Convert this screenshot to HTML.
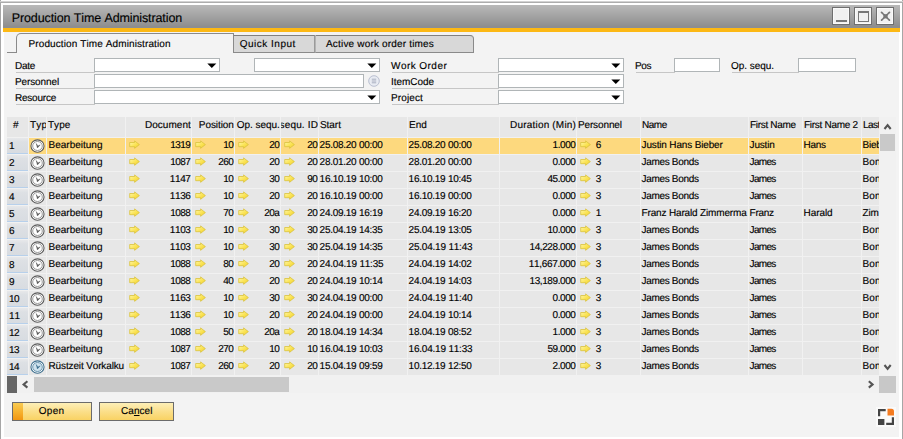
<!DOCTYPE html><html><head><meta charset="utf-8"><title>Production Time Administration</title><style>
html,body{margin:0;padding:0}
body{width:903px;height:439px;background:#fff;position:relative;overflow:hidden;font-family:"Liberation Sans", sans-serif;font-size:10px;color:#000;font-kerning:none;text-rendering:geometricPrecision}
div,span,svg{position:absolute;box-sizing:border-box}
.t{white-space:pre;line-height:12px;height:12px;font-size:10px;-webkit-text-stroke:0.14px #000}
.in{background:#fff;border:1px solid #b0b5b7;height:14px}
.ul{height:1px;background:#c6c6c6}
.cell{overflow:hidden}
.ar{overflow:visible}

</style></head><body>
<svg width="0" height="0" style="left:0;top:0"><defs><linearGradient id="ag" x1="0" y1="0" x2="1" y2="1"><stop offset="0" stop-color="#fff9b4"/><stop offset="0.5" stop-color="#fbe55a"/><stop offset="1" stop-color="#f2d026"/></linearGradient></defs></svg>
<div style="left:0;top:0;width:1px;height:439px;background:#a6a6a6"></div>
<div style="left:902px;top:0;width:1px;height:439px;background:#a6a6a6"></div>
<div style="left:0;top:1px;width:903px;height:1px;background:#d2d2d2"></div>
<div style="left:0;top:2px;width:903px;height:1px;background:#adadad"></div>
<div style="left:3px;top:5px;width:897px;height:23px;background:linear-gradient(#b9b9b9,#8b8b8b)"></div>
<div style="left:3px;top:27px;width:897px;height:1px;background:#8b8e95"></div>
<div style="left:3px;top:28px;width:897px;height:4px;background:#fcb814"></div>
<div style="left:4px;top:32px;width:895px;height:405px;background:#f3f3f3"></div>
<span class="t" style="top:10.7px;letter-spacing:-0.110px;font-size:12.5px;line-height:14px;height:14px;left:11.7px;">Production Time Administration</span>
<div style="left:832px;top:7px;width:18px;height:18px;background:#f1f1f1;border:1px solid #6f6f6f;box-shadow:inset 0 0 0 1px #fafafa"></div>
<div style="left:854px;top:7px;width:18px;height:18px;background:#f1f1f1;border:1px solid #6f6f6f;box-shadow:inset 0 0 0 1px #fafafa"></div>
<div style="left:876px;top:7px;width:18px;height:18px;background:#f1f1f1;border:1px solid #6f6f6f;box-shadow:inset 0 0 0 1px #fafafa"></div>
<div style="left:836px;top:20px;width:11px;height:2px;background:#777"></div>
<div style="left:858px;top:11px;width:11px;height:11px;border:1px solid #777;border-top-width:2px"></div>
<svg style="left:880px;top:11px" width="11" height="11" viewBox="0 0 11 11"><path d="M1.5 1.3L9.5 9.3M9.5 1.3L1.5 9.3" stroke="#777" stroke-width="1.7" stroke-linecap="round" stroke-dasharray="1.6 0.8"/><rect x="3.4" y="3.2" width="4.2" height="4.2" fill="#777"/></svg>
<div style="left:233px;top:35px;width:82px;height:18px;background:#d8d8d8;border:1px solid #8a8a8a;border-left:none;border-top-color:#808080;border-right-color:#9a9a9a"></div>
<div style="left:315px;top:35px;width:159px;height:18px;background:#d8d8d8;border:1px solid #8a8a8a;border-left:1px solid #b4b4b4;border-top-color:#808080;border-radius:0 4px 0 0"></div>
<div style="left:16px;top:33px;width:218px;height:20px;background:#f3f3f3;border:1px solid #8a8a8a;border-bottom:none;border-radius:5px 0 0 0"></div>
<div style="left:7px;top:52px;width:10px;height:1px;background:#8a8a8a"></div>
<span class="t" style="top:39px;letter-spacing:0.105px;left:28.5px;">Production Time Administration</span>
<span class="t" style="top:39px;letter-spacing:0.493px;left:239.8px;">Quick Input</span>
<span class="t" style="top:39px;letter-spacing:0.177px;left:326.0px;">Active work order times</span>
<span class="t" style="top:61px;letter-spacing:-0.281px;left:15.0px;">Date</span>
<div class="ul" style="left:16px;top:72px;width:79px"></div>
<span class="t" style="top:77px;letter-spacing:-0.115px;left:15.0px;">Personnel</span>
<div class="ul" style="left:16px;top:88px;width:79px"></div>
<span class="t" style="top:93px;letter-spacing:-0.225px;left:15.0px;">Resource</span>
<div class="ul" style="left:16px;top:104px;width:79px"></div>
<span class="t" style="top:61px;letter-spacing:0.451px;left:391.0px;">Work Order</span>
<div class="ul" style="left:392px;top:72px;width:107px"></div>
<span class="t" style="top:77px;letter-spacing:-0.044px;left:391.0px;">ItemCode</span>
<div class="ul" style="left:392px;top:88px;width:107px"></div>
<span class="t" style="top:93px;letter-spacing:0.125px;left:391.0px;">Project</span>
<div class="ul" style="left:392px;top:104px;width:107px"></div>
<span class="t" style="top:61px;letter-spacing:-0.411px;left:635.0px;">Pos</span>
<div class="ul" style="left:636px;top:72px;width:39px"></div>
<span class="t" style="top:61px;letter-spacing:-0.040px;left:731.0px;">Op. sequ.</span>
<div class="ul" style="left:732px;top:72px;width:67px"></div>
<div class="in" style="left:94px;top:58px;width:126px"></div>
<svg style="left:207px;top:63px" width="10" height="6" viewBox="0 0 10 6"><path d="M0.3 0.4H9.3L4.8 5Z" fill="#000"/></svg>
<div class="in" style="left:254px;top:58px;width:126px"></div>
<svg style="left:367px;top:63px" width="10" height="6" viewBox="0 0 10 6"><path d="M0.3 0.4H9.3L4.8 5Z" fill="#000"/></svg>
<div class="in" style="left:94px;top:74px;width:270px"></div>
<div class="in" style="left:94px;top:90px;width:286px"></div>
<svg style="left:367px;top:95px" width="10" height="6" viewBox="0 0 10 6"><path d="M0.3 0.4H9.3L4.8 5Z" fill="#000"/></svg>
<div class="in" style="left:498px;top:58px;width:126px"></div>
<svg style="left:611px;top:63px" width="10" height="6" viewBox="0 0 10 6"><path d="M0.3 0.4H9.3L4.8 5Z" fill="#000"/></svg>
<div class="in" style="left:498px;top:74px;width:126px"></div>
<svg style="left:611px;top:79px" width="10" height="6" viewBox="0 0 10 6"><path d="M0.3 0.4H9.3L4.8 5Z" fill="#000"/></svg>
<div class="in" style="left:498px;top:90px;width:126px"></div>
<svg style="left:611px;top:95px" width="10" height="6" viewBox="0 0 10 6"><path d="M0.3 0.4H9.3L4.8 5Z" fill="#000"/></svg>
<div class="in" style="left:674px;top:58px;width:46px"></div>
<div class="in" style="left:798px;top:58px;width:58px"></div>
<svg style="left:368px;top:75px" width="12" height="12" viewBox="0 0 12 12"><circle cx="6" cy="6" r="5.3" fill="#e9ecf3" stroke="#b9bfd0" stroke-width="1"/><path d="M3.8 4.2H8.2M3.8 6H8.2M3.8 7.8H8.2" stroke="#a3a9ba" stroke-width="0.9"/></svg>
<div style="left:7px;top:117px;width:872px;height:259px;background:#f1f1f1"></div>
<div class="cell" style="left:7px;top:117px;width:21px;height:20px;background:#e7e7e7;"><span class="t" style="top:3px;letter-spacing:1.438px;left:6.1px;">#</span></div>
<div class="cell" style="left:29px;top:117px;width:17px;height:20px;background:#e7e7e7;"><span class="t" style="top:3px;letter-spacing:0.294px;left:0.9px;">Typ</span></div>
<div class="cell" style="left:47px;top:117px;width:78px;height:20px;background:#e7e7e7;"><span class="t" style="top:3px;letter-spacing:0.080px;left:0.9px;">Type</span></div>
<div class="cell" style="left:126px;top:117px;width:65px;height:20px;background:#e7e7e7;"><span class="t" style="top:3px;letter-spacing:0.053px;right:0.50px;margin-right:-0.45px;">Document</span></div>
<div class="cell" style="left:192px;top:117px;width:42px;height:20px;background:#e7e7e7;"><span class="t" style="top:3px;letter-spacing:-0.072px;right:0.50px;margin-right:-0.33px;">Position</span></div>
<div class="cell" style="left:235px;top:117px;width:45px;height:20px;background:#e7e7e7;"><span class="t" style="top:3px;letter-spacing:-0.040px;right:0.50px;margin-right:-0.36px;">Op. sequ.</span></div>
<div class="cell" style="left:281px;top:117px;width:37px;height:20px;background:#e7e7e7;"><span class="t" style="top:3px;letter-spacing:0.155px;right:0.50px;margin-right:-0.56px;">Op. sequ. ID</span></div>
<div class="cell" style="left:319px;top:117px;width:88px;height:20px;background:#e7e7e7;"><span class="t" style="top:3px;letter-spacing:-0.024px;left:0.9px;">Start</span></div>
<div class="cell" style="left:408px;top:117px;width:91px;height:20px;background:#e7e7e7;"><span class="t" style="top:3px;letter-spacing:0.069px;left:0.9px;">End</span></div>
<div class="cell" style="left:500px;top:117px;width:76px;height:20px;background:#e7e7e7;"><span class="t" style="top:3px;letter-spacing:0.189px;right:0.50px;margin-right:-0.59px;">Duration (Min)</span></div>
<div class="cell" style="left:577px;top:117px;width:63px;height:20px;background:#e7e7e7;"><span class="t" style="top:3px;letter-spacing:-0.115px;left:0.9px;">Personnel</span></div>
<div class="cell" style="left:641px;top:117px;width:107px;height:20px;background:#e7e7e7;"><span class="t" style="top:3px;letter-spacing:-0.419px;left:0.9px;">Name</span></div>
<div class="cell" style="left:749px;top:117px;width:53px;height:20px;background:#e7e7e7;"><span class="t" style="top:3px;letter-spacing:-0.289px;left:0.9px;">First Name</span></div>
<div class="cell" style="left:803px;top:117px;width:58px;height:20px;background:#e7e7e7;"><span class="t" style="top:3px;letter-spacing:-0.269px;left:0.9px;">First Name 2</span></div>
<div class="cell" style="left:862px;top:117px;width:17px;height:20px;background:#e7e7e7;"><span class="t" style="top:3px;letter-spacing:-0.475px;left:0.9px;">Last</span></div>
<div class="cell" style="left:7px;top:138px;width:21px;height:16px;background:linear-gradient(#e7e8ea,#dde0e4 25%,#d8dce1);border-bottom:1px solid #b7d0eb"><span class="t" style="top:3px;letter-spacing:-0.562px;left:2.1px;">1</span></div>
<div class="cell" style="left:29px;top:138px;width:17px;height:16px;background:#fdd97e;"><svg class="ar" style="left:1.2px;top:0.5px" width="15" height="14" viewBox="0 0 15 14"><ellipse cx="7.5" cy="7" rx="6.55" ry="6.15" fill="#fff" stroke="#5a5a5a" stroke-width="1.05"/><ellipse cx="7.5" cy="7" rx="4.8" ry="4.5" fill="#fff" stroke="#8c8c8c" stroke-width="0.9"/><path d="M6.3 4.6L7.4 8.9L10.2 5.9L7.8 7.1Z" fill="#5a5a5a" stroke="#5a5a5a" stroke-width="0.5" stroke-linejoin="round"/></svg></div>
<div class="cell" style="left:47px;top:138px;width:78px;height:16px;background:#fdd97e;"><span class="t" style="top:2px;letter-spacing:0.006px;left:1.5px;">Bearbeitung</span></div>
<div class="cell" style="left:126px;top:138px;width:65px;height:16px;background:#fdd97e;"><svg class="ar" style="left:2.5px;top:2.2px" width="12" height="10" viewBox="0 0 12 10"><path d="M0.7 2.5H5.6V0.9L10.4 4.6L5.6 8.3V6.7H0.7Z" fill="url(#ag)" stroke="#d9c23c" stroke-width="0.8" stroke-linejoin="round"/></svg><span class="t" style="top:2px;letter-spacing:-0.562px;right:0.50px;margin-right:0.16px;">1319</span></div>
<div class="cell" style="left:192px;top:138px;width:42px;height:16px;background:#fdd97e;"><svg class="ar" style="left:2.5px;top:2.2px" width="12" height="10" viewBox="0 0 12 10"><path d="M0.7 2.5H5.6V0.9L10.4 4.6L5.6 8.3V6.7H0.7Z" fill="url(#ag)" stroke="#d9c23c" stroke-width="0.8" stroke-linejoin="round"/></svg><span class="t" style="top:2px;letter-spacing:-0.562px;right:0.50px;margin-right:0.16px;">10</span></div>
<div class="cell" style="left:235px;top:138px;width:45px;height:16px;background:#fdd97e;"><svg class="ar" style="left:2.5px;top:2.2px" width="12" height="10" viewBox="0 0 12 10"><path d="M0.7 2.5H5.6V0.9L10.4 4.6L5.6 8.3V6.7H0.7Z" fill="url(#ag)" stroke="#d9c23c" stroke-width="0.8" stroke-linejoin="round"/></svg><span class="t" style="top:2px;letter-spacing:-0.562px;right:0.50px;margin-right:0.16px;">20</span></div>
<div class="cell" style="left:281px;top:138px;width:37px;height:16px;background:#fdd97e;"><svg class="ar" style="left:2.5px;top:2.2px" width="12" height="10" viewBox="0 0 12 10"><path d="M0.7 2.5H5.6V0.9L10.4 4.6L5.6 8.3V6.7H0.7Z" fill="url(#ag)" stroke="#d9c23c" stroke-width="0.8" stroke-linejoin="round"/></svg><span class="t" style="top:2px;letter-spacing:-0.562px;right:0.50px;margin-right:0.16px;">20</span></div>
<div class="cell" style="left:319px;top:138px;width:88px;height:16px;background:#fdd97e;"><span class="t" style="top:2px;letter-spacing:-0.266px;left:0.6px;">25.08.20 00:00</span></div>
<div class="cell" style="left:408px;top:138px;width:91px;height:16px;background:#fdd97e;"><span class="t" style="top:2px;letter-spacing:-0.266px;left:0.6px;">25.08.20 00:00</span></div>
<div class="cell" style="left:500px;top:138px;width:76px;height:16px;background:#fdd97e;"><span class="t" style="top:2px;letter-spacing:-0.405px;right:0.50px;margin-right:0.00px;">1.000</span></div>
<div class="cell" style="left:577px;top:138px;width:63px;height:16px;background:#fdd97e;"><svg class="ar" style="left:2.5px;top:2.2px" width="12" height="10" viewBox="0 0 12 10"><path d="M0.7 2.5H5.6V0.9L10.4 4.6L5.6 8.3V6.7H0.7Z" fill="url(#ag)" stroke="#d9c23c" stroke-width="0.8" stroke-linejoin="round"/></svg><span class="t" style="top:2px;letter-spacing:-0.562px;left:18.8px;">6</span></div>
<div class="cell" style="left:641px;top:138px;width:107px;height:16px;background:#fdd97e;"><span class="t" style="top:2px;letter-spacing:-0.163px;left:0.6px;">Justin Hans Bieber</span></div>
<div class="cell" style="left:749px;top:138px;width:53px;height:16px;background:#fdd97e;"><span class="t" style="top:2px;letter-spacing:-0.187px;left:0.6px;">Justin</span></div>
<div class="cell" style="left:803px;top:138px;width:58px;height:16px;background:#fdd97e;"><span class="t" style="top:2px;letter-spacing:-0.336px;left:0.6px;">Hans</span></div>
<div class="cell" style="left:862px;top:138px;width:17px;height:16px;background:#fdd97e;"><span class="t" style="top:2px;letter-spacing:-0.254px;left:0.6px;">Bieb</span></div>
<div class="cell" style="left:7px;top:155px;width:21px;height:16px;background:linear-gradient(#e7e8ea,#dde0e4 25%,#d8dce1);border-bottom:1px solid #b7d0eb"><span class="t" style="top:3px;letter-spacing:-0.562px;left:2.1px;">2</span></div>
<div class="cell" style="left:29px;top:155px;width:17px;height:16px;background:#e7e7e7;"><svg class="ar" style="left:1.2px;top:0.5px" width="15" height="14" viewBox="0 0 15 14"><ellipse cx="7.5" cy="7" rx="6.55" ry="6.15" fill="#fff" stroke="#5a5a5a" stroke-width="1.05"/><ellipse cx="7.5" cy="7" rx="4.8" ry="4.5" fill="#fff" stroke="#8c8c8c" stroke-width="0.9"/><path d="M6.3 4.6L7.4 8.9L10.2 5.9L7.8 7.1Z" fill="#5a5a5a" stroke="#5a5a5a" stroke-width="0.5" stroke-linejoin="round"/></svg></div>
<div class="cell" style="left:47px;top:155px;width:78px;height:16px;background:#e7e7e7;"><span class="t" style="top:2px;letter-spacing:0.006px;left:1.5px;">Bearbeitung</span></div>
<div class="cell" style="left:126px;top:155px;width:65px;height:16px;background:#e7e7e7;"><svg class="ar" style="left:2.5px;top:2.2px" width="12" height="10" viewBox="0 0 12 10"><path d="M0.7 2.5H5.6V0.9L10.4 4.6L5.6 8.3V6.7H0.7Z" fill="url(#ag)" stroke="#d9c23c" stroke-width="0.8" stroke-linejoin="round"/></svg><span class="t" style="top:2px;letter-spacing:-0.562px;right:0.50px;margin-right:0.16px;">1087</span></div>
<div class="cell" style="left:192px;top:155px;width:42px;height:16px;background:#e7e7e7;"><svg class="ar" style="left:2.5px;top:2.2px" width="12" height="10" viewBox="0 0 12 10"><path d="M0.7 2.5H5.6V0.9L10.4 4.6L5.6 8.3V6.7H0.7Z" fill="url(#ag)" stroke="#d9c23c" stroke-width="0.8" stroke-linejoin="round"/></svg><span class="t" style="top:2px;letter-spacing:-0.562px;right:0.50px;margin-right:0.16px;">260</span></div>
<div class="cell" style="left:235px;top:155px;width:45px;height:16px;background:#e7e7e7;"><svg class="ar" style="left:2.5px;top:2.2px" width="12" height="10" viewBox="0 0 12 10"><path d="M0.7 2.5H5.6V0.9L10.4 4.6L5.6 8.3V6.7H0.7Z" fill="url(#ag)" stroke="#d9c23c" stroke-width="0.8" stroke-linejoin="round"/></svg><span class="t" style="top:2px;letter-spacing:-0.562px;right:0.50px;margin-right:0.16px;">20</span></div>
<div class="cell" style="left:281px;top:155px;width:37px;height:16px;background:#e7e7e7;"><svg class="ar" style="left:2.5px;top:2.2px" width="12" height="10" viewBox="0 0 12 10"><path d="M0.7 2.5H5.6V0.9L10.4 4.6L5.6 8.3V6.7H0.7Z" fill="url(#ag)" stroke="#d9c23c" stroke-width="0.8" stroke-linejoin="round"/></svg><span class="t" style="top:2px;letter-spacing:-0.562px;right:0.50px;margin-right:0.16px;">20</span></div>
<div class="cell" style="left:319px;top:155px;width:88px;height:16px;background:#e7e7e7;"><span class="t" style="top:2px;letter-spacing:-0.266px;left:0.6px;">28.01.20 00:00</span></div>
<div class="cell" style="left:408px;top:155px;width:91px;height:16px;background:#e7e7e7;"><span class="t" style="top:2px;letter-spacing:-0.266px;left:0.6px;">28.01.20 00:00</span></div>
<div class="cell" style="left:500px;top:155px;width:76px;height:16px;background:#e7e7e7;"><span class="t" style="top:2px;letter-spacing:-0.405px;right:0.50px;margin-right:0.00px;">0.000</span></div>
<div class="cell" style="left:577px;top:155px;width:63px;height:16px;background:#e7e7e7;"><svg class="ar" style="left:2.5px;top:2.2px" width="12" height="10" viewBox="0 0 12 10"><path d="M0.7 2.5H5.6V0.9L10.4 4.6L5.6 8.3V6.7H0.7Z" fill="url(#ag)" stroke="#d9c23c" stroke-width="0.8" stroke-linejoin="round"/></svg><span class="t" style="top:2px;letter-spacing:-0.562px;left:18.8px;">3</span></div>
<div class="cell" style="left:641px;top:155px;width:107px;height:16px;background:#e7e7e7;"><span class="t" style="top:2px;letter-spacing:-0.326px;left:0.6px;">James Bonds</span></div>
<div class="cell" style="left:749px;top:155px;width:53px;height:16px;background:#e7e7e7;"><span class="t" style="top:2px;letter-spacing:-0.691px;left:0.6px;">James</span></div>
<div class="cell" style="left:803px;top:155px;width:58px;height:16px;background:#e7e7e7;"></div>
<div class="cell" style="left:862px;top:155px;width:17px;height:16px;background:#e7e7e7;"><span class="t" style="top:2px;letter-spacing:0.069px;left:0.6px;">Bon</span></div>
<div class="cell" style="left:7px;top:172px;width:21px;height:16px;background:linear-gradient(#e7e8ea,#dde0e4 25%,#d8dce1);border-bottom:1px solid #b7d0eb"><span class="t" style="top:3px;letter-spacing:-0.562px;left:2.1px;">3</span></div>
<div class="cell" style="left:29px;top:172px;width:17px;height:16px;background:#e7e7e7;"><svg class="ar" style="left:1.2px;top:0.5px" width="15" height="14" viewBox="0 0 15 14"><ellipse cx="7.5" cy="7" rx="6.55" ry="6.15" fill="#fff" stroke="#5a5a5a" stroke-width="1.05"/><ellipse cx="7.5" cy="7" rx="4.8" ry="4.5" fill="#fff" stroke="#8c8c8c" stroke-width="0.9"/><path d="M6.3 4.6L7.4 8.9L10.2 5.9L7.8 7.1Z" fill="#5a5a5a" stroke="#5a5a5a" stroke-width="0.5" stroke-linejoin="round"/></svg></div>
<div class="cell" style="left:47px;top:172px;width:78px;height:16px;background:#e7e7e7;"><span class="t" style="top:2px;letter-spacing:0.006px;left:1.5px;">Bearbeitung</span></div>
<div class="cell" style="left:126px;top:172px;width:65px;height:16px;background:#e7e7e7;"><svg class="ar" style="left:2.5px;top:2.2px" width="12" height="10" viewBox="0 0 12 10"><path d="M0.7 2.5H5.6V0.9L10.4 4.6L5.6 8.3V6.7H0.7Z" fill="url(#ag)" stroke="#d9c23c" stroke-width="0.8" stroke-linejoin="round"/></svg><span class="t" style="top:2px;letter-spacing:-0.376px;right:0.50px;margin-right:-0.02px;">1147</span></div>
<div class="cell" style="left:192px;top:172px;width:42px;height:16px;background:#e7e7e7;"><svg class="ar" style="left:2.5px;top:2.2px" width="12" height="10" viewBox="0 0 12 10"><path d="M0.7 2.5H5.6V0.9L10.4 4.6L5.6 8.3V6.7H0.7Z" fill="url(#ag)" stroke="#d9c23c" stroke-width="0.8" stroke-linejoin="round"/></svg><span class="t" style="top:2px;letter-spacing:-0.562px;right:0.50px;margin-right:0.16px;">10</span></div>
<div class="cell" style="left:235px;top:172px;width:45px;height:16px;background:#e7e7e7;"><svg class="ar" style="left:2.5px;top:2.2px" width="12" height="10" viewBox="0 0 12 10"><path d="M0.7 2.5H5.6V0.9L10.4 4.6L5.6 8.3V6.7H0.7Z" fill="url(#ag)" stroke="#d9c23c" stroke-width="0.8" stroke-linejoin="round"/></svg><span class="t" style="top:2px;letter-spacing:-0.562px;right:0.50px;margin-right:0.16px;">30</span></div>
<div class="cell" style="left:281px;top:172px;width:37px;height:16px;background:#e7e7e7;"><svg class="ar" style="left:2.5px;top:2.2px" width="12" height="10" viewBox="0 0 12 10"><path d="M0.7 2.5H5.6V0.9L10.4 4.6L5.6 8.3V6.7H0.7Z" fill="url(#ag)" stroke="#d9c23c" stroke-width="0.8" stroke-linejoin="round"/></svg><span class="t" style="top:2px;letter-spacing:-0.562px;right:0.50px;margin-right:0.16px;">90</span></div>
<div class="cell" style="left:319px;top:172px;width:88px;height:16px;background:#e7e7e7;"><span class="t" style="top:2px;letter-spacing:-0.266px;left:0.6px;">16.10.19 10:00</span></div>
<div class="cell" style="left:408px;top:172px;width:91px;height:16px;background:#e7e7e7;"><span class="t" style="top:2px;letter-spacing:-0.266px;left:0.6px;">16.10.19 10:45</span></div>
<div class="cell" style="left:500px;top:172px;width:76px;height:16px;background:#e7e7e7;"><span class="t" style="top:2px;letter-spacing:-0.431px;right:0.50px;margin-right:0.03px;">45.000</span></div>
<div class="cell" style="left:577px;top:172px;width:63px;height:16px;background:#e7e7e7;"><svg class="ar" style="left:2.5px;top:2.2px" width="12" height="10" viewBox="0 0 12 10"><path d="M0.7 2.5H5.6V0.9L10.4 4.6L5.6 8.3V6.7H0.7Z" fill="url(#ag)" stroke="#d9c23c" stroke-width="0.8" stroke-linejoin="round"/></svg><span class="t" style="top:2px;letter-spacing:-0.562px;left:18.8px;">3</span></div>
<div class="cell" style="left:641px;top:172px;width:107px;height:16px;background:#e7e7e7;"><span class="t" style="top:2px;letter-spacing:-0.326px;left:0.6px;">James Bonds</span></div>
<div class="cell" style="left:749px;top:172px;width:53px;height:16px;background:#e7e7e7;"><span class="t" style="top:2px;letter-spacing:-0.691px;left:0.6px;">James</span></div>
<div class="cell" style="left:803px;top:172px;width:58px;height:16px;background:#e7e7e7;"></div>
<div class="cell" style="left:862px;top:172px;width:17px;height:16px;background:#e7e7e7;"><span class="t" style="top:2px;letter-spacing:0.069px;left:0.6px;">Bon</span></div>
<div class="cell" style="left:7px;top:189px;width:21px;height:16px;background:linear-gradient(#e7e8ea,#dde0e4 25%,#d8dce1);border-bottom:1px solid #b7d0eb"><span class="t" style="top:3px;letter-spacing:-0.562px;left:2.1px;">4</span></div>
<div class="cell" style="left:29px;top:189px;width:17px;height:16px;background:#e7e7e7;"><svg class="ar" style="left:1.2px;top:0.5px" width="15" height="14" viewBox="0 0 15 14"><ellipse cx="7.5" cy="7" rx="6.55" ry="6.15" fill="#fff" stroke="#5a5a5a" stroke-width="1.05"/><ellipse cx="7.5" cy="7" rx="4.8" ry="4.5" fill="#fff" stroke="#8c8c8c" stroke-width="0.9"/><path d="M6.3 4.6L7.4 8.9L10.2 5.9L7.8 7.1Z" fill="#5a5a5a" stroke="#5a5a5a" stroke-width="0.5" stroke-linejoin="round"/></svg></div>
<div class="cell" style="left:47px;top:189px;width:78px;height:16px;background:#e7e7e7;"><span class="t" style="top:2px;letter-spacing:0.006px;left:1.5px;">Bearbeitung</span></div>
<div class="cell" style="left:126px;top:189px;width:65px;height:16px;background:#e7e7e7;"><svg class="ar" style="left:2.5px;top:2.2px" width="12" height="10" viewBox="0 0 12 10"><path d="M0.7 2.5H5.6V0.9L10.4 4.6L5.6 8.3V6.7H0.7Z" fill="url(#ag)" stroke="#d9c23c" stroke-width="0.8" stroke-linejoin="round"/></svg><span class="t" style="top:2px;letter-spacing:-0.376px;right:0.50px;margin-right:-0.02px;">1136</span></div>
<div class="cell" style="left:192px;top:189px;width:42px;height:16px;background:#e7e7e7;"><svg class="ar" style="left:2.5px;top:2.2px" width="12" height="10" viewBox="0 0 12 10"><path d="M0.7 2.5H5.6V0.9L10.4 4.6L5.6 8.3V6.7H0.7Z" fill="url(#ag)" stroke="#d9c23c" stroke-width="0.8" stroke-linejoin="round"/></svg><span class="t" style="top:2px;letter-spacing:-0.562px;right:0.50px;margin-right:0.16px;">10</span></div>
<div class="cell" style="left:235px;top:189px;width:45px;height:16px;background:#e7e7e7;"><svg class="ar" style="left:2.5px;top:2.2px" width="12" height="10" viewBox="0 0 12 10"><path d="M0.7 2.5H5.6V0.9L10.4 4.6L5.6 8.3V6.7H0.7Z" fill="url(#ag)" stroke="#d9c23c" stroke-width="0.8" stroke-linejoin="round"/></svg><span class="t" style="top:2px;letter-spacing:-0.562px;right:0.50px;margin-right:0.16px;">20</span></div>
<div class="cell" style="left:281px;top:189px;width:37px;height:16px;background:#e7e7e7;"><svg class="ar" style="left:2.5px;top:2.2px" width="12" height="10" viewBox="0 0 12 10"><path d="M0.7 2.5H5.6V0.9L10.4 4.6L5.6 8.3V6.7H0.7Z" fill="url(#ag)" stroke="#d9c23c" stroke-width="0.8" stroke-linejoin="round"/></svg><span class="t" style="top:2px;letter-spacing:-0.562px;right:0.50px;margin-right:0.16px;">20</span></div>
<div class="cell" style="left:319px;top:189px;width:88px;height:16px;background:#e7e7e7;"><span class="t" style="top:2px;letter-spacing:-0.266px;left:0.6px;">16.10.19 00:00</span></div>
<div class="cell" style="left:408px;top:189px;width:91px;height:16px;background:#e7e7e7;"><span class="t" style="top:2px;letter-spacing:-0.266px;left:0.6px;">16.10.19 00:00</span></div>
<div class="cell" style="left:500px;top:189px;width:76px;height:16px;background:#e7e7e7;"><span class="t" style="top:2px;letter-spacing:-0.405px;right:0.50px;margin-right:0.00px;">0.000</span></div>
<div class="cell" style="left:577px;top:189px;width:63px;height:16px;background:#e7e7e7;"><svg class="ar" style="left:2.5px;top:2.2px" width="12" height="10" viewBox="0 0 12 10"><path d="M0.7 2.5H5.6V0.9L10.4 4.6L5.6 8.3V6.7H0.7Z" fill="url(#ag)" stroke="#d9c23c" stroke-width="0.8" stroke-linejoin="round"/></svg><span class="t" style="top:2px;letter-spacing:-0.562px;left:18.8px;">3</span></div>
<div class="cell" style="left:641px;top:189px;width:107px;height:16px;background:#e7e7e7;"><span class="t" style="top:2px;letter-spacing:-0.326px;left:0.6px;">James Bonds</span></div>
<div class="cell" style="left:749px;top:189px;width:53px;height:16px;background:#e7e7e7;"><span class="t" style="top:2px;letter-spacing:-0.691px;left:0.6px;">James</span></div>
<div class="cell" style="left:803px;top:189px;width:58px;height:16px;background:#e7e7e7;"></div>
<div class="cell" style="left:862px;top:189px;width:17px;height:16px;background:#e7e7e7;"><span class="t" style="top:2px;letter-spacing:0.069px;left:0.6px;">Bon</span></div>
<div class="cell" style="left:7px;top:206px;width:21px;height:16px;background:linear-gradient(#e7e8ea,#dde0e4 25%,#d8dce1);border-bottom:1px solid #b7d0eb"><span class="t" style="top:3px;letter-spacing:-0.562px;left:2.1px;">5</span></div>
<div class="cell" style="left:29px;top:206px;width:17px;height:16px;background:#e7e7e7;"><svg class="ar" style="left:1.2px;top:0.5px" width="15" height="14" viewBox="0 0 15 14"><ellipse cx="7.5" cy="7" rx="6.55" ry="6.15" fill="#fff" stroke="#5a5a5a" stroke-width="1.05"/><ellipse cx="7.5" cy="7" rx="4.8" ry="4.5" fill="#fff" stroke="#8c8c8c" stroke-width="0.9"/><path d="M6.3 4.6L7.4 8.9L10.2 5.9L7.8 7.1Z" fill="#5a5a5a" stroke="#5a5a5a" stroke-width="0.5" stroke-linejoin="round"/></svg></div>
<div class="cell" style="left:47px;top:206px;width:78px;height:16px;background:#e7e7e7;"><span class="t" style="top:2px;letter-spacing:0.006px;left:1.5px;">Bearbeitung</span></div>
<div class="cell" style="left:126px;top:206px;width:65px;height:16px;background:#e7e7e7;"><svg class="ar" style="left:2.5px;top:2.2px" width="12" height="10" viewBox="0 0 12 10"><path d="M0.7 2.5H5.6V0.9L10.4 4.6L5.6 8.3V6.7H0.7Z" fill="url(#ag)" stroke="#d9c23c" stroke-width="0.8" stroke-linejoin="round"/></svg><span class="t" style="top:2px;letter-spacing:-0.562px;right:0.50px;margin-right:0.16px;">1088</span></div>
<div class="cell" style="left:192px;top:206px;width:42px;height:16px;background:#e7e7e7;"><svg class="ar" style="left:2.5px;top:2.2px" width="12" height="10" viewBox="0 0 12 10"><path d="M0.7 2.5H5.6V0.9L10.4 4.6L5.6 8.3V6.7H0.7Z" fill="url(#ag)" stroke="#d9c23c" stroke-width="0.8" stroke-linejoin="round"/></svg><span class="t" style="top:2px;letter-spacing:-0.562px;right:0.50px;margin-right:0.16px;">70</span></div>
<div class="cell" style="left:235px;top:206px;width:45px;height:16px;background:#e7e7e7;"><svg class="ar" style="left:2.5px;top:2.2px" width="12" height="10" viewBox="0 0 12 10"><path d="M0.7 2.5H5.6V0.9L10.4 4.6L5.6 8.3V6.7H0.7Z" fill="url(#ag)" stroke="#d9c23c" stroke-width="0.8" stroke-linejoin="round"/></svg><span class="t" style="top:2px;letter-spacing:-0.562px;right:0.50px;margin-right:0.16px;">20a</span></div>
<div class="cell" style="left:281px;top:206px;width:37px;height:16px;background:#e7e7e7;"><svg class="ar" style="left:2.5px;top:2.2px" width="12" height="10" viewBox="0 0 12 10"><path d="M0.7 2.5H5.6V0.9L10.4 4.6L5.6 8.3V6.7H0.7Z" fill="url(#ag)" stroke="#d9c23c" stroke-width="0.8" stroke-linejoin="round"/></svg><span class="t" style="top:2px;letter-spacing:-0.562px;right:0.50px;margin-right:0.16px;">20</span></div>
<div class="cell" style="left:319px;top:206px;width:88px;height:16px;background:#e7e7e7;"><span class="t" style="top:2px;letter-spacing:-0.266px;left:0.6px;">24.09.19 16:19</span></div>
<div class="cell" style="left:408px;top:206px;width:91px;height:16px;background:#e7e7e7;"><span class="t" style="top:2px;letter-spacing:-0.266px;left:0.6px;">24.09.19 16:20</span></div>
<div class="cell" style="left:500px;top:206px;width:76px;height:16px;background:#e7e7e7;"><span class="t" style="top:2px;letter-spacing:-0.405px;right:0.50px;margin-right:0.00px;">0.000</span></div>
<div class="cell" style="left:577px;top:206px;width:63px;height:16px;background:#e7e7e7;"><svg class="ar" style="left:2.5px;top:2.2px" width="12" height="10" viewBox="0 0 12 10"><path d="M0.7 2.5H5.6V0.9L10.4 4.6L5.6 8.3V6.7H0.7Z" fill="url(#ag)" stroke="#d9c23c" stroke-width="0.8" stroke-linejoin="round"/></svg><span class="t" style="top:2px;letter-spacing:-0.562px;left:18.8px;">1</span></div>
<div class="cell" style="left:641px;top:206px;width:107px;height:16px;background:#e7e7e7;"><span class="t" style="top:2px;letter-spacing:-0.160px;left:0.6px;">Franz Harald Zimmerma</span></div>
<div class="cell" style="left:749px;top:206px;width:53px;height:16px;background:#e7e7e7;"><span class="t" style="top:2px;letter-spacing:-0.312px;left:0.6px;">Franz</span></div>
<div class="cell" style="left:803px;top:206px;width:58px;height:16px;background:#e7e7e7;"><span class="t" style="top:2px;letter-spacing:-0.077px;left:0.6px;">Harald</span></div>
<div class="cell" style="left:862px;top:206px;width:17px;height:16px;background:#e7e7e7;"><span class="t" style="top:2px;letter-spacing:-0.220px;left:0.6px;">Zim</span></div>
<div class="cell" style="left:7px;top:223px;width:21px;height:16px;background:linear-gradient(#e7e8ea,#dde0e4 25%,#d8dce1);border-bottom:1px solid #b7d0eb"><span class="t" style="top:3px;letter-spacing:-0.562px;left:2.1px;">6</span></div>
<div class="cell" style="left:29px;top:223px;width:17px;height:16px;background:#e7e7e7;"><svg class="ar" style="left:1.2px;top:0.5px" width="15" height="14" viewBox="0 0 15 14"><ellipse cx="7.5" cy="7" rx="6.55" ry="6.15" fill="#fff" stroke="#5a5a5a" stroke-width="1.05"/><ellipse cx="7.5" cy="7" rx="4.8" ry="4.5" fill="#fff" stroke="#8c8c8c" stroke-width="0.9"/><path d="M6.3 4.6L7.4 8.9L10.2 5.9L7.8 7.1Z" fill="#5a5a5a" stroke="#5a5a5a" stroke-width="0.5" stroke-linejoin="round"/></svg></div>
<div class="cell" style="left:47px;top:223px;width:78px;height:16px;background:#e7e7e7;"><span class="t" style="top:2px;letter-spacing:0.006px;left:1.5px;">Bearbeitung</span></div>
<div class="cell" style="left:126px;top:223px;width:65px;height:16px;background:#e7e7e7;"><svg class="ar" style="left:2.5px;top:2.2px" width="12" height="10" viewBox="0 0 12 10"><path d="M0.7 2.5H5.6V0.9L10.4 4.6L5.6 8.3V6.7H0.7Z" fill="url(#ag)" stroke="#d9c23c" stroke-width="0.8" stroke-linejoin="round"/></svg><span class="t" style="top:2px;letter-spacing:-0.376px;right:0.50px;margin-right:-0.02px;">1103</span></div>
<div class="cell" style="left:192px;top:223px;width:42px;height:16px;background:#e7e7e7;"><svg class="ar" style="left:2.5px;top:2.2px" width="12" height="10" viewBox="0 0 12 10"><path d="M0.7 2.5H5.6V0.9L10.4 4.6L5.6 8.3V6.7H0.7Z" fill="url(#ag)" stroke="#d9c23c" stroke-width="0.8" stroke-linejoin="round"/></svg><span class="t" style="top:2px;letter-spacing:-0.562px;right:0.50px;margin-right:0.16px;">10</span></div>
<div class="cell" style="left:235px;top:223px;width:45px;height:16px;background:#e7e7e7;"><svg class="ar" style="left:2.5px;top:2.2px" width="12" height="10" viewBox="0 0 12 10"><path d="M0.7 2.5H5.6V0.9L10.4 4.6L5.6 8.3V6.7H0.7Z" fill="url(#ag)" stroke="#d9c23c" stroke-width="0.8" stroke-linejoin="round"/></svg><span class="t" style="top:2px;letter-spacing:-0.562px;right:0.50px;margin-right:0.16px;">30</span></div>
<div class="cell" style="left:281px;top:223px;width:37px;height:16px;background:#e7e7e7;"><svg class="ar" style="left:2.5px;top:2.2px" width="12" height="10" viewBox="0 0 12 10"><path d="M0.7 2.5H5.6V0.9L10.4 4.6L5.6 8.3V6.7H0.7Z" fill="url(#ag)" stroke="#d9c23c" stroke-width="0.8" stroke-linejoin="round"/></svg><span class="t" style="top:2px;letter-spacing:-0.562px;right:0.50px;margin-right:0.16px;">30</span></div>
<div class="cell" style="left:319px;top:223px;width:88px;height:16px;background:#e7e7e7;"><span class="t" style="top:2px;letter-spacing:-0.266px;left:0.6px;">25.04.19 14:35</span></div>
<div class="cell" style="left:408px;top:223px;width:91px;height:16px;background:#e7e7e7;"><span class="t" style="top:2px;letter-spacing:-0.266px;left:0.6px;">25.04.19 13:05</span></div>
<div class="cell" style="left:500px;top:223px;width:76px;height:16px;background:#e7e7e7;"><span class="t" style="top:2px;letter-spacing:-0.431px;right:0.50px;margin-right:0.03px;">10.000</span></div>
<div class="cell" style="left:577px;top:223px;width:63px;height:16px;background:#e7e7e7;"><svg class="ar" style="left:2.5px;top:2.2px" width="12" height="10" viewBox="0 0 12 10"><path d="M0.7 2.5H5.6V0.9L10.4 4.6L5.6 8.3V6.7H0.7Z" fill="url(#ag)" stroke="#d9c23c" stroke-width="0.8" stroke-linejoin="round"/></svg><span class="t" style="top:2px;letter-spacing:-0.562px;left:18.8px;">3</span></div>
<div class="cell" style="left:641px;top:223px;width:107px;height:16px;background:#e7e7e7;"><span class="t" style="top:2px;letter-spacing:-0.326px;left:0.6px;">James Bonds</span></div>
<div class="cell" style="left:749px;top:223px;width:53px;height:16px;background:#e7e7e7;"><span class="t" style="top:2px;letter-spacing:-0.691px;left:0.6px;">James</span></div>
<div class="cell" style="left:803px;top:223px;width:58px;height:16px;background:#e7e7e7;"></div>
<div class="cell" style="left:862px;top:223px;width:17px;height:16px;background:#e7e7e7;"><span class="t" style="top:2px;letter-spacing:0.069px;left:0.6px;">Bon</span></div>
<div class="cell" style="left:7px;top:240px;width:21px;height:16px;background:linear-gradient(#e7e8ea,#dde0e4 25%,#d8dce1);border-bottom:1px solid #b7d0eb"><span class="t" style="top:3px;letter-spacing:-0.562px;left:2.1px;">7</span></div>
<div class="cell" style="left:29px;top:240px;width:17px;height:16px;background:#e7e7e7;"><svg class="ar" style="left:1.2px;top:0.5px" width="15" height="14" viewBox="0 0 15 14"><ellipse cx="7.5" cy="7" rx="6.55" ry="6.15" fill="#fff" stroke="#5a5a5a" stroke-width="1.05"/><ellipse cx="7.5" cy="7" rx="4.8" ry="4.5" fill="#fff" stroke="#8c8c8c" stroke-width="0.9"/><path d="M6.3 4.6L7.4 8.9L10.2 5.9L7.8 7.1Z" fill="#5a5a5a" stroke="#5a5a5a" stroke-width="0.5" stroke-linejoin="round"/></svg></div>
<div class="cell" style="left:47px;top:240px;width:78px;height:16px;background:#e7e7e7;"><span class="t" style="top:2px;letter-spacing:0.006px;left:1.5px;">Bearbeitung</span></div>
<div class="cell" style="left:126px;top:240px;width:65px;height:16px;background:#e7e7e7;"><svg class="ar" style="left:2.5px;top:2.2px" width="12" height="10" viewBox="0 0 12 10"><path d="M0.7 2.5H5.6V0.9L10.4 4.6L5.6 8.3V6.7H0.7Z" fill="url(#ag)" stroke="#d9c23c" stroke-width="0.8" stroke-linejoin="round"/></svg><span class="t" style="top:2px;letter-spacing:-0.376px;right:0.50px;margin-right:-0.02px;">1103</span></div>
<div class="cell" style="left:192px;top:240px;width:42px;height:16px;background:#e7e7e7;"><svg class="ar" style="left:2.5px;top:2.2px" width="12" height="10" viewBox="0 0 12 10"><path d="M0.7 2.5H5.6V0.9L10.4 4.6L5.6 8.3V6.7H0.7Z" fill="url(#ag)" stroke="#d9c23c" stroke-width="0.8" stroke-linejoin="round"/></svg><span class="t" style="top:2px;letter-spacing:-0.562px;right:0.50px;margin-right:0.16px;">10</span></div>
<div class="cell" style="left:235px;top:240px;width:45px;height:16px;background:#e7e7e7;"><svg class="ar" style="left:2.5px;top:2.2px" width="12" height="10" viewBox="0 0 12 10"><path d="M0.7 2.5H5.6V0.9L10.4 4.6L5.6 8.3V6.7H0.7Z" fill="url(#ag)" stroke="#d9c23c" stroke-width="0.8" stroke-linejoin="round"/></svg><span class="t" style="top:2px;letter-spacing:-0.562px;right:0.50px;margin-right:0.16px;">30</span></div>
<div class="cell" style="left:281px;top:240px;width:37px;height:16px;background:#e7e7e7;"><svg class="ar" style="left:2.5px;top:2.2px" width="12" height="10" viewBox="0 0 12 10"><path d="M0.7 2.5H5.6V0.9L10.4 4.6L5.6 8.3V6.7H0.7Z" fill="url(#ag)" stroke="#d9c23c" stroke-width="0.8" stroke-linejoin="round"/></svg><span class="t" style="top:2px;letter-spacing:-0.562px;right:0.50px;margin-right:0.16px;">30</span></div>
<div class="cell" style="left:319px;top:240px;width:88px;height:16px;background:#e7e7e7;"><span class="t" style="top:2px;letter-spacing:-0.266px;left:0.6px;">25.04.19 14:35</span></div>
<div class="cell" style="left:408px;top:240px;width:91px;height:16px;background:#e7e7e7;"><span class="t" style="top:2px;letter-spacing:-0.213px;left:0.6px;">25.04.19 11:43</span></div>
<div class="cell" style="left:500px;top:240px;width:76px;height:16px;background:#e7e7e7;"><span class="t" style="top:2px;letter-spacing:-0.405px;right:0.50px;margin-right:0.00px;">14,228.000</span></div>
<div class="cell" style="left:577px;top:240px;width:63px;height:16px;background:#e7e7e7;"><svg class="ar" style="left:2.5px;top:2.2px" width="12" height="10" viewBox="0 0 12 10"><path d="M0.7 2.5H5.6V0.9L10.4 4.6L5.6 8.3V6.7H0.7Z" fill="url(#ag)" stroke="#d9c23c" stroke-width="0.8" stroke-linejoin="round"/></svg><span class="t" style="top:2px;letter-spacing:-0.562px;left:18.8px;">3</span></div>
<div class="cell" style="left:641px;top:240px;width:107px;height:16px;background:#e7e7e7;"><span class="t" style="top:2px;letter-spacing:-0.326px;left:0.6px;">James Bonds</span></div>
<div class="cell" style="left:749px;top:240px;width:53px;height:16px;background:#e7e7e7;"><span class="t" style="top:2px;letter-spacing:-0.691px;left:0.6px;">James</span></div>
<div class="cell" style="left:803px;top:240px;width:58px;height:16px;background:#e7e7e7;"></div>
<div class="cell" style="left:862px;top:240px;width:17px;height:16px;background:#e7e7e7;"><span class="t" style="top:2px;letter-spacing:0.069px;left:0.6px;">Bon</span></div>
<div class="cell" style="left:7px;top:257px;width:21px;height:16px;background:linear-gradient(#e7e8ea,#dde0e4 25%,#d8dce1);border-bottom:1px solid #b7d0eb"><span class="t" style="top:3px;letter-spacing:-0.562px;left:2.1px;">8</span></div>
<div class="cell" style="left:29px;top:257px;width:17px;height:16px;background:#e7e7e7;"><svg class="ar" style="left:1.2px;top:0.5px" width="15" height="14" viewBox="0 0 15 14"><ellipse cx="7.5" cy="7" rx="6.55" ry="6.15" fill="#fff" stroke="#5a5a5a" stroke-width="1.05"/><ellipse cx="7.5" cy="7" rx="4.8" ry="4.5" fill="#fff" stroke="#8c8c8c" stroke-width="0.9"/><path d="M6.3 4.6L7.4 8.9L10.2 5.9L7.8 7.1Z" fill="#5a5a5a" stroke="#5a5a5a" stroke-width="0.5" stroke-linejoin="round"/></svg></div>
<div class="cell" style="left:47px;top:257px;width:78px;height:16px;background:#e7e7e7;"><span class="t" style="top:2px;letter-spacing:0.006px;left:1.5px;">Bearbeitung</span></div>
<div class="cell" style="left:126px;top:257px;width:65px;height:16px;background:#e7e7e7;"><svg class="ar" style="left:2.5px;top:2.2px" width="12" height="10" viewBox="0 0 12 10"><path d="M0.7 2.5H5.6V0.9L10.4 4.6L5.6 8.3V6.7H0.7Z" fill="url(#ag)" stroke="#d9c23c" stroke-width="0.8" stroke-linejoin="round"/></svg><span class="t" style="top:2px;letter-spacing:-0.562px;right:0.50px;margin-right:0.16px;">1088</span></div>
<div class="cell" style="left:192px;top:257px;width:42px;height:16px;background:#e7e7e7;"><svg class="ar" style="left:2.5px;top:2.2px" width="12" height="10" viewBox="0 0 12 10"><path d="M0.7 2.5H5.6V0.9L10.4 4.6L5.6 8.3V6.7H0.7Z" fill="url(#ag)" stroke="#d9c23c" stroke-width="0.8" stroke-linejoin="round"/></svg><span class="t" style="top:2px;letter-spacing:-0.562px;right:0.50px;margin-right:0.16px;">80</span></div>
<div class="cell" style="left:235px;top:257px;width:45px;height:16px;background:#e7e7e7;"><svg class="ar" style="left:2.5px;top:2.2px" width="12" height="10" viewBox="0 0 12 10"><path d="M0.7 2.5H5.6V0.9L10.4 4.6L5.6 8.3V6.7H0.7Z" fill="url(#ag)" stroke="#d9c23c" stroke-width="0.8" stroke-linejoin="round"/></svg><span class="t" style="top:2px;letter-spacing:-0.562px;right:0.50px;margin-right:0.16px;">20</span></div>
<div class="cell" style="left:281px;top:257px;width:37px;height:16px;background:#e7e7e7;"><svg class="ar" style="left:2.5px;top:2.2px" width="12" height="10" viewBox="0 0 12 10"><path d="M0.7 2.5H5.6V0.9L10.4 4.6L5.6 8.3V6.7H0.7Z" fill="url(#ag)" stroke="#d9c23c" stroke-width="0.8" stroke-linejoin="round"/></svg><span class="t" style="top:2px;letter-spacing:-0.562px;right:0.50px;margin-right:0.16px;">20</span></div>
<div class="cell" style="left:319px;top:257px;width:88px;height:16px;background:#e7e7e7;"><span class="t" style="top:2px;letter-spacing:-0.213px;left:0.6px;">24.04.19 11:35</span></div>
<div class="cell" style="left:408px;top:257px;width:91px;height:16px;background:#e7e7e7;"><span class="t" style="top:2px;letter-spacing:-0.266px;left:0.6px;">24.04.19 14:02</span></div>
<div class="cell" style="left:500px;top:257px;width:76px;height:16px;background:#e7e7e7;"><span class="t" style="top:2px;letter-spacing:-0.331px;right:0.50px;margin-right:-0.07px;">11,667.000</span></div>
<div class="cell" style="left:577px;top:257px;width:63px;height:16px;background:#e7e7e7;"><svg class="ar" style="left:2.5px;top:2.2px" width="12" height="10" viewBox="0 0 12 10"><path d="M0.7 2.5H5.6V0.9L10.4 4.6L5.6 8.3V6.7H0.7Z" fill="url(#ag)" stroke="#d9c23c" stroke-width="0.8" stroke-linejoin="round"/></svg><span class="t" style="top:2px;letter-spacing:-0.562px;left:18.8px;">3</span></div>
<div class="cell" style="left:641px;top:257px;width:107px;height:16px;background:#e7e7e7;"><span class="t" style="top:2px;letter-spacing:-0.326px;left:0.6px;">James Bonds</span></div>
<div class="cell" style="left:749px;top:257px;width:53px;height:16px;background:#e7e7e7;"><span class="t" style="top:2px;letter-spacing:-0.691px;left:0.6px;">James</span></div>
<div class="cell" style="left:803px;top:257px;width:58px;height:16px;background:#e7e7e7;"></div>
<div class="cell" style="left:862px;top:257px;width:17px;height:16px;background:#e7e7e7;"><span class="t" style="top:2px;letter-spacing:0.069px;left:0.6px;">Bon</span></div>
<div class="cell" style="left:7px;top:274px;width:21px;height:16px;background:linear-gradient(#e7e8ea,#dde0e4 25%,#d8dce1);border-bottom:1px solid #b7d0eb"><span class="t" style="top:3px;letter-spacing:-0.562px;left:2.1px;">9</span></div>
<div class="cell" style="left:29px;top:274px;width:17px;height:16px;background:#e7e7e7;"><svg class="ar" style="left:1.2px;top:0.5px" width="15" height="14" viewBox="0 0 15 14"><ellipse cx="7.5" cy="7" rx="6.55" ry="6.15" fill="#fff" stroke="#5a5a5a" stroke-width="1.05"/><ellipse cx="7.5" cy="7" rx="4.8" ry="4.5" fill="#fff" stroke="#8c8c8c" stroke-width="0.9"/><path d="M6.3 4.6L7.4 8.9L10.2 5.9L7.8 7.1Z" fill="#5a5a5a" stroke="#5a5a5a" stroke-width="0.5" stroke-linejoin="round"/></svg></div>
<div class="cell" style="left:47px;top:274px;width:78px;height:16px;background:#e7e7e7;"><span class="t" style="top:2px;letter-spacing:0.006px;left:1.5px;">Bearbeitung</span></div>
<div class="cell" style="left:126px;top:274px;width:65px;height:16px;background:#e7e7e7;"><svg class="ar" style="left:2.5px;top:2.2px" width="12" height="10" viewBox="0 0 12 10"><path d="M0.7 2.5H5.6V0.9L10.4 4.6L5.6 8.3V6.7H0.7Z" fill="url(#ag)" stroke="#d9c23c" stroke-width="0.8" stroke-linejoin="round"/></svg><span class="t" style="top:2px;letter-spacing:-0.562px;right:0.50px;margin-right:0.16px;">1088</span></div>
<div class="cell" style="left:192px;top:274px;width:42px;height:16px;background:#e7e7e7;"><svg class="ar" style="left:2.5px;top:2.2px" width="12" height="10" viewBox="0 0 12 10"><path d="M0.7 2.5H5.6V0.9L10.4 4.6L5.6 8.3V6.7H0.7Z" fill="url(#ag)" stroke="#d9c23c" stroke-width="0.8" stroke-linejoin="round"/></svg><span class="t" style="top:2px;letter-spacing:-0.562px;right:0.50px;margin-right:0.16px;">40</span></div>
<div class="cell" style="left:235px;top:274px;width:45px;height:16px;background:#e7e7e7;"><svg class="ar" style="left:2.5px;top:2.2px" width="12" height="10" viewBox="0 0 12 10"><path d="M0.7 2.5H5.6V0.9L10.4 4.6L5.6 8.3V6.7H0.7Z" fill="url(#ag)" stroke="#d9c23c" stroke-width="0.8" stroke-linejoin="round"/></svg><span class="t" style="top:2px;letter-spacing:-0.562px;right:0.50px;margin-right:0.16px;">20</span></div>
<div class="cell" style="left:281px;top:274px;width:37px;height:16px;background:#e7e7e7;"><svg class="ar" style="left:2.5px;top:2.2px" width="12" height="10" viewBox="0 0 12 10"><path d="M0.7 2.5H5.6V0.9L10.4 4.6L5.6 8.3V6.7H0.7Z" fill="url(#ag)" stroke="#d9c23c" stroke-width="0.8" stroke-linejoin="round"/></svg><span class="t" style="top:2px;letter-spacing:-0.562px;right:0.50px;margin-right:0.16px;">20</span></div>
<div class="cell" style="left:319px;top:274px;width:88px;height:16px;background:#e7e7e7;"><span class="t" style="top:2px;letter-spacing:-0.266px;left:0.6px;">24.04.19 10:14</span></div>
<div class="cell" style="left:408px;top:274px;width:91px;height:16px;background:#e7e7e7;"><span class="t" style="top:2px;letter-spacing:-0.266px;left:0.6px;">24.04.19 14:03</span></div>
<div class="cell" style="left:500px;top:274px;width:76px;height:16px;background:#e7e7e7;"><span class="t" style="top:2px;letter-spacing:-0.405px;right:0.50px;margin-right:0.00px;">13,189.000</span></div>
<div class="cell" style="left:577px;top:274px;width:63px;height:16px;background:#e7e7e7;"><svg class="ar" style="left:2.5px;top:2.2px" width="12" height="10" viewBox="0 0 12 10"><path d="M0.7 2.5H5.6V0.9L10.4 4.6L5.6 8.3V6.7H0.7Z" fill="url(#ag)" stroke="#d9c23c" stroke-width="0.8" stroke-linejoin="round"/></svg><span class="t" style="top:2px;letter-spacing:-0.562px;left:18.8px;">3</span></div>
<div class="cell" style="left:641px;top:274px;width:107px;height:16px;background:#e7e7e7;"><span class="t" style="top:2px;letter-spacing:-0.326px;left:0.6px;">James Bonds</span></div>
<div class="cell" style="left:749px;top:274px;width:53px;height:16px;background:#e7e7e7;"><span class="t" style="top:2px;letter-spacing:-0.691px;left:0.6px;">James</span></div>
<div class="cell" style="left:803px;top:274px;width:58px;height:16px;background:#e7e7e7;"></div>
<div class="cell" style="left:862px;top:274px;width:17px;height:16px;background:#e7e7e7;"><span class="t" style="top:2px;letter-spacing:0.069px;left:0.6px;">Bon</span></div>
<div class="cell" style="left:7px;top:291px;width:21px;height:16px;background:linear-gradient(#e7e8ea,#dde0e4 25%,#d8dce1);border-bottom:1px solid #b7d0eb"><span class="t" style="top:3px;letter-spacing:-0.562px;left:2.1px;">10</span></div>
<div class="cell" style="left:29px;top:291px;width:17px;height:16px;background:#e7e7e7;"><svg class="ar" style="left:1.2px;top:0.5px" width="15" height="14" viewBox="0 0 15 14"><ellipse cx="7.5" cy="7" rx="6.55" ry="6.15" fill="#fff" stroke="#5a5a5a" stroke-width="1.05"/><ellipse cx="7.5" cy="7" rx="4.8" ry="4.5" fill="#fff" stroke="#8c8c8c" stroke-width="0.9"/><path d="M6.3 4.6L7.4 8.9L10.2 5.9L7.8 7.1Z" fill="#5a5a5a" stroke="#5a5a5a" stroke-width="0.5" stroke-linejoin="round"/></svg></div>
<div class="cell" style="left:47px;top:291px;width:78px;height:16px;background:#e7e7e7;"><span class="t" style="top:2px;letter-spacing:0.006px;left:1.5px;">Bearbeitung</span></div>
<div class="cell" style="left:126px;top:291px;width:65px;height:16px;background:#e7e7e7;"><svg class="ar" style="left:2.5px;top:2.2px" width="12" height="10" viewBox="0 0 12 10"><path d="M0.7 2.5H5.6V0.9L10.4 4.6L5.6 8.3V6.7H0.7Z" fill="url(#ag)" stroke="#d9c23c" stroke-width="0.8" stroke-linejoin="round"/></svg><span class="t" style="top:2px;letter-spacing:-0.376px;right:0.50px;margin-right:-0.02px;">1163</span></div>
<div class="cell" style="left:192px;top:291px;width:42px;height:16px;background:#e7e7e7;"><svg class="ar" style="left:2.5px;top:2.2px" width="12" height="10" viewBox="0 0 12 10"><path d="M0.7 2.5H5.6V0.9L10.4 4.6L5.6 8.3V6.7H0.7Z" fill="url(#ag)" stroke="#d9c23c" stroke-width="0.8" stroke-linejoin="round"/></svg><span class="t" style="top:2px;letter-spacing:-0.562px;right:0.50px;margin-right:0.16px;">10</span></div>
<div class="cell" style="left:235px;top:291px;width:45px;height:16px;background:#e7e7e7;"><svg class="ar" style="left:2.5px;top:2.2px" width="12" height="10" viewBox="0 0 12 10"><path d="M0.7 2.5H5.6V0.9L10.4 4.6L5.6 8.3V6.7H0.7Z" fill="url(#ag)" stroke="#d9c23c" stroke-width="0.8" stroke-linejoin="round"/></svg><span class="t" style="top:2px;letter-spacing:-0.562px;right:0.50px;margin-right:0.16px;">30</span></div>
<div class="cell" style="left:281px;top:291px;width:37px;height:16px;background:#e7e7e7;"><svg class="ar" style="left:2.5px;top:2.2px" width="12" height="10" viewBox="0 0 12 10"><path d="M0.7 2.5H5.6V0.9L10.4 4.6L5.6 8.3V6.7H0.7Z" fill="url(#ag)" stroke="#d9c23c" stroke-width="0.8" stroke-linejoin="round"/></svg><span class="t" style="top:2px;letter-spacing:-0.562px;right:0.50px;margin-right:0.16px;">30</span></div>
<div class="cell" style="left:319px;top:291px;width:88px;height:16px;background:#e7e7e7;"><span class="t" style="top:2px;letter-spacing:-0.266px;left:0.6px;">24.04.19 00:00</span></div>
<div class="cell" style="left:408px;top:291px;width:91px;height:16px;background:#e7e7e7;"><span class="t" style="top:2px;letter-spacing:-0.213px;left:0.6px;">24.04.19 11:40</span></div>
<div class="cell" style="left:500px;top:291px;width:76px;height:16px;background:#e7e7e7;"><span class="t" style="top:2px;letter-spacing:-0.405px;right:0.50px;margin-right:0.00px;">0.000</span></div>
<div class="cell" style="left:577px;top:291px;width:63px;height:16px;background:#e7e7e7;"><svg class="ar" style="left:2.5px;top:2.2px" width="12" height="10" viewBox="0 0 12 10"><path d="M0.7 2.5H5.6V0.9L10.4 4.6L5.6 8.3V6.7H0.7Z" fill="url(#ag)" stroke="#d9c23c" stroke-width="0.8" stroke-linejoin="round"/></svg><span class="t" style="top:2px;letter-spacing:-0.562px;left:18.8px;">3</span></div>
<div class="cell" style="left:641px;top:291px;width:107px;height:16px;background:#e7e7e7;"><span class="t" style="top:2px;letter-spacing:-0.326px;left:0.6px;">James Bonds</span></div>
<div class="cell" style="left:749px;top:291px;width:53px;height:16px;background:#e7e7e7;"><span class="t" style="top:2px;letter-spacing:-0.691px;left:0.6px;">James</span></div>
<div class="cell" style="left:803px;top:291px;width:58px;height:16px;background:#e7e7e7;"></div>
<div class="cell" style="left:862px;top:291px;width:17px;height:16px;background:#e7e7e7;"><span class="t" style="top:2px;letter-spacing:0.069px;left:0.6px;">Bon</span></div>
<div class="cell" style="left:7px;top:308px;width:21px;height:16px;background:linear-gradient(#e7e8ea,#dde0e4 25%,#d8dce1);border-bottom:1px solid #b7d0eb"><span class="t" style="top:3px;letter-spacing:-0.191px;left:2.1px;">11</span></div>
<div class="cell" style="left:29px;top:308px;width:17px;height:16px;background:#e7e7e7;"><svg class="ar" style="left:1.2px;top:0.5px" width="15" height="14" viewBox="0 0 15 14"><ellipse cx="7.5" cy="7" rx="6.55" ry="6.15" fill="#fff" stroke="#5a5a5a" stroke-width="1.05"/><ellipse cx="7.5" cy="7" rx="4.8" ry="4.5" fill="#fff" stroke="#8c8c8c" stroke-width="0.9"/><path d="M6.3 4.6L7.4 8.9L10.2 5.9L7.8 7.1Z" fill="#5a5a5a" stroke="#5a5a5a" stroke-width="0.5" stroke-linejoin="round"/></svg></div>
<div class="cell" style="left:47px;top:308px;width:78px;height:16px;background:#e7e7e7;"><span class="t" style="top:2px;letter-spacing:0.006px;left:1.5px;">Bearbeitung</span></div>
<div class="cell" style="left:126px;top:308px;width:65px;height:16px;background:#e7e7e7;"><svg class="ar" style="left:2.5px;top:2.2px" width="12" height="10" viewBox="0 0 12 10"><path d="M0.7 2.5H5.6V0.9L10.4 4.6L5.6 8.3V6.7H0.7Z" fill="url(#ag)" stroke="#d9c23c" stroke-width="0.8" stroke-linejoin="round"/></svg><span class="t" style="top:2px;letter-spacing:-0.376px;right:0.50px;margin-right:-0.02px;">1136</span></div>
<div class="cell" style="left:192px;top:308px;width:42px;height:16px;background:#e7e7e7;"><svg class="ar" style="left:2.5px;top:2.2px" width="12" height="10" viewBox="0 0 12 10"><path d="M0.7 2.5H5.6V0.9L10.4 4.6L5.6 8.3V6.7H0.7Z" fill="url(#ag)" stroke="#d9c23c" stroke-width="0.8" stroke-linejoin="round"/></svg><span class="t" style="top:2px;letter-spacing:-0.562px;right:0.50px;margin-right:0.16px;">10</span></div>
<div class="cell" style="left:235px;top:308px;width:45px;height:16px;background:#e7e7e7;"><svg class="ar" style="left:2.5px;top:2.2px" width="12" height="10" viewBox="0 0 12 10"><path d="M0.7 2.5H5.6V0.9L10.4 4.6L5.6 8.3V6.7H0.7Z" fill="url(#ag)" stroke="#d9c23c" stroke-width="0.8" stroke-linejoin="round"/></svg><span class="t" style="top:2px;letter-spacing:-0.562px;right:0.50px;margin-right:0.16px;">20</span></div>
<div class="cell" style="left:281px;top:308px;width:37px;height:16px;background:#e7e7e7;"><svg class="ar" style="left:2.5px;top:2.2px" width="12" height="10" viewBox="0 0 12 10"><path d="M0.7 2.5H5.6V0.9L10.4 4.6L5.6 8.3V6.7H0.7Z" fill="url(#ag)" stroke="#d9c23c" stroke-width="0.8" stroke-linejoin="round"/></svg><span class="t" style="top:2px;letter-spacing:-0.562px;right:0.50px;margin-right:0.16px;">20</span></div>
<div class="cell" style="left:319px;top:308px;width:88px;height:16px;background:#e7e7e7;"><span class="t" style="top:2px;letter-spacing:-0.266px;left:0.6px;">24.04.19 00:00</span></div>
<div class="cell" style="left:408px;top:308px;width:91px;height:16px;background:#e7e7e7;"><span class="t" style="top:2px;letter-spacing:-0.266px;left:0.6px;">24.04.19 10:14</span></div>
<div class="cell" style="left:500px;top:308px;width:76px;height:16px;background:#e7e7e7;"><span class="t" style="top:2px;letter-spacing:-0.405px;right:0.50px;margin-right:0.00px;">0.000</span></div>
<div class="cell" style="left:577px;top:308px;width:63px;height:16px;background:#e7e7e7;"><svg class="ar" style="left:2.5px;top:2.2px" width="12" height="10" viewBox="0 0 12 10"><path d="M0.7 2.5H5.6V0.9L10.4 4.6L5.6 8.3V6.7H0.7Z" fill="url(#ag)" stroke="#d9c23c" stroke-width="0.8" stroke-linejoin="round"/></svg><span class="t" style="top:2px;letter-spacing:-0.562px;left:18.8px;">3</span></div>
<div class="cell" style="left:641px;top:308px;width:107px;height:16px;background:#e7e7e7;"><span class="t" style="top:2px;letter-spacing:-0.326px;left:0.6px;">James Bonds</span></div>
<div class="cell" style="left:749px;top:308px;width:53px;height:16px;background:#e7e7e7;"><span class="t" style="top:2px;letter-spacing:-0.691px;left:0.6px;">James</span></div>
<div class="cell" style="left:803px;top:308px;width:58px;height:16px;background:#e7e7e7;"></div>
<div class="cell" style="left:862px;top:308px;width:17px;height:16px;background:#e7e7e7;"><span class="t" style="top:2px;letter-spacing:0.069px;left:0.6px;">Bon</span></div>
<div class="cell" style="left:7px;top:325px;width:21px;height:16px;background:linear-gradient(#e7e8ea,#dde0e4 25%,#d8dce1);border-bottom:1px solid #b7d0eb"><span class="t" style="top:3px;letter-spacing:-0.562px;left:2.1px;">12</span></div>
<div class="cell" style="left:29px;top:325px;width:17px;height:16px;background:#e7e7e7;"><svg class="ar" style="left:1.2px;top:0.5px" width="15" height="14" viewBox="0 0 15 14"><ellipse cx="7.5" cy="7" rx="6.55" ry="6.15" fill="#fff" stroke="#5a5a5a" stroke-width="1.05"/><ellipse cx="7.5" cy="7" rx="4.8" ry="4.5" fill="#fff" stroke="#8c8c8c" stroke-width="0.9"/><path d="M6.3 4.6L7.4 8.9L10.2 5.9L7.8 7.1Z" fill="#5a5a5a" stroke="#5a5a5a" stroke-width="0.5" stroke-linejoin="round"/></svg></div>
<div class="cell" style="left:47px;top:325px;width:78px;height:16px;background:#e7e7e7;"><span class="t" style="top:2px;letter-spacing:0.006px;left:1.5px;">Bearbeitung</span></div>
<div class="cell" style="left:126px;top:325px;width:65px;height:16px;background:#e7e7e7;"><svg class="ar" style="left:2.5px;top:2.2px" width="12" height="10" viewBox="0 0 12 10"><path d="M0.7 2.5H5.6V0.9L10.4 4.6L5.6 8.3V6.7H0.7Z" fill="url(#ag)" stroke="#d9c23c" stroke-width="0.8" stroke-linejoin="round"/></svg><span class="t" style="top:2px;letter-spacing:-0.562px;right:0.50px;margin-right:0.16px;">1088</span></div>
<div class="cell" style="left:192px;top:325px;width:42px;height:16px;background:#e7e7e7;"><svg class="ar" style="left:2.5px;top:2.2px" width="12" height="10" viewBox="0 0 12 10"><path d="M0.7 2.5H5.6V0.9L10.4 4.6L5.6 8.3V6.7H0.7Z" fill="url(#ag)" stroke="#d9c23c" stroke-width="0.8" stroke-linejoin="round"/></svg><span class="t" style="top:2px;letter-spacing:-0.562px;right:0.50px;margin-right:0.16px;">50</span></div>
<div class="cell" style="left:235px;top:325px;width:45px;height:16px;background:#e7e7e7;"><svg class="ar" style="left:2.5px;top:2.2px" width="12" height="10" viewBox="0 0 12 10"><path d="M0.7 2.5H5.6V0.9L10.4 4.6L5.6 8.3V6.7H0.7Z" fill="url(#ag)" stroke="#d9c23c" stroke-width="0.8" stroke-linejoin="round"/></svg><span class="t" style="top:2px;letter-spacing:-0.562px;right:0.50px;margin-right:0.16px;">20a</span></div>
<div class="cell" style="left:281px;top:325px;width:37px;height:16px;background:#e7e7e7;"><svg class="ar" style="left:2.5px;top:2.2px" width="12" height="10" viewBox="0 0 12 10"><path d="M0.7 2.5H5.6V0.9L10.4 4.6L5.6 8.3V6.7H0.7Z" fill="url(#ag)" stroke="#d9c23c" stroke-width="0.8" stroke-linejoin="round"/></svg><span class="t" style="top:2px;letter-spacing:-0.562px;right:0.50px;margin-right:0.16px;">20</span></div>
<div class="cell" style="left:319px;top:325px;width:88px;height:16px;background:#e7e7e7;"><span class="t" style="top:2px;letter-spacing:-0.266px;left:0.6px;">18.04.19 14:34</span></div>
<div class="cell" style="left:408px;top:325px;width:91px;height:16px;background:#e7e7e7;"><span class="t" style="top:2px;letter-spacing:-0.266px;left:0.6px;">18.04.19 08:52</span></div>
<div class="cell" style="left:500px;top:325px;width:76px;height:16px;background:#e7e7e7;"><span class="t" style="top:2px;letter-spacing:-0.405px;right:0.50px;margin-right:0.00px;">1.000</span></div>
<div class="cell" style="left:577px;top:325px;width:63px;height:16px;background:#e7e7e7;"><svg class="ar" style="left:2.5px;top:2.2px" width="12" height="10" viewBox="0 0 12 10"><path d="M0.7 2.5H5.6V0.9L10.4 4.6L5.6 8.3V6.7H0.7Z" fill="url(#ag)" stroke="#d9c23c" stroke-width="0.8" stroke-linejoin="round"/></svg><span class="t" style="top:2px;letter-spacing:-0.562px;left:18.8px;">3</span></div>
<div class="cell" style="left:641px;top:325px;width:107px;height:16px;background:#e7e7e7;"><span class="t" style="top:2px;letter-spacing:-0.326px;left:0.6px;">James Bonds</span></div>
<div class="cell" style="left:749px;top:325px;width:53px;height:16px;background:#e7e7e7;"><span class="t" style="top:2px;letter-spacing:-0.691px;left:0.6px;">James</span></div>
<div class="cell" style="left:803px;top:325px;width:58px;height:16px;background:#e7e7e7;"></div>
<div class="cell" style="left:862px;top:325px;width:17px;height:16px;background:#e7e7e7;"><span class="t" style="top:2px;letter-spacing:0.069px;left:0.6px;">Bon</span></div>
<div class="cell" style="left:7px;top:342px;width:21px;height:16px;background:linear-gradient(#e7e8ea,#dde0e4 25%,#d8dce1);border-bottom:1px solid #b7d0eb"><span class="t" style="top:3px;letter-spacing:-0.562px;left:2.1px;">13</span></div>
<div class="cell" style="left:29px;top:342px;width:17px;height:16px;background:#e7e7e7;"><svg class="ar" style="left:1.2px;top:0.5px" width="15" height="14" viewBox="0 0 15 14"><ellipse cx="7.5" cy="7" rx="6.55" ry="6.15" fill="#fff" stroke="#5a5a5a" stroke-width="1.05"/><ellipse cx="7.5" cy="7" rx="4.8" ry="4.5" fill="#fff" stroke="#8c8c8c" stroke-width="0.9"/><path d="M6.3 4.6L7.4 8.9L10.2 5.9L7.8 7.1Z" fill="#5a5a5a" stroke="#5a5a5a" stroke-width="0.5" stroke-linejoin="round"/></svg></div>
<div class="cell" style="left:47px;top:342px;width:78px;height:16px;background:#e7e7e7;"><span class="t" style="top:2px;letter-spacing:0.006px;left:1.5px;">Bearbeitung</span></div>
<div class="cell" style="left:126px;top:342px;width:65px;height:16px;background:#e7e7e7;"><svg class="ar" style="left:2.5px;top:2.2px" width="12" height="10" viewBox="0 0 12 10"><path d="M0.7 2.5H5.6V0.9L10.4 4.6L5.6 8.3V6.7H0.7Z" fill="url(#ag)" stroke="#d9c23c" stroke-width="0.8" stroke-linejoin="round"/></svg><span class="t" style="top:2px;letter-spacing:-0.562px;right:0.50px;margin-right:0.16px;">1087</span></div>
<div class="cell" style="left:192px;top:342px;width:42px;height:16px;background:#e7e7e7;"><svg class="ar" style="left:2.5px;top:2.2px" width="12" height="10" viewBox="0 0 12 10"><path d="M0.7 2.5H5.6V0.9L10.4 4.6L5.6 8.3V6.7H0.7Z" fill="url(#ag)" stroke="#d9c23c" stroke-width="0.8" stroke-linejoin="round"/></svg><span class="t" style="top:2px;letter-spacing:-0.562px;right:0.50px;margin-right:0.16px;">270</span></div>
<div class="cell" style="left:235px;top:342px;width:45px;height:16px;background:#e7e7e7;"><svg class="ar" style="left:2.5px;top:2.2px" width="12" height="10" viewBox="0 0 12 10"><path d="M0.7 2.5H5.6V0.9L10.4 4.6L5.6 8.3V6.7H0.7Z" fill="url(#ag)" stroke="#d9c23c" stroke-width="0.8" stroke-linejoin="round"/></svg><span class="t" style="top:2px;letter-spacing:-0.562px;right:0.50px;margin-right:0.16px;">10</span></div>
<div class="cell" style="left:281px;top:342px;width:37px;height:16px;background:#e7e7e7;"><svg class="ar" style="left:2.5px;top:2.2px" width="12" height="10" viewBox="0 0 12 10"><path d="M0.7 2.5H5.6V0.9L10.4 4.6L5.6 8.3V6.7H0.7Z" fill="url(#ag)" stroke="#d9c23c" stroke-width="0.8" stroke-linejoin="round"/></svg><span class="t" style="top:2px;letter-spacing:-0.562px;right:0.50px;margin-right:0.16px;">10</span></div>
<div class="cell" style="left:319px;top:342px;width:88px;height:16px;background:#e7e7e7;"><span class="t" style="top:2px;letter-spacing:-0.266px;left:0.6px;">16.04.19 10:03</span></div>
<div class="cell" style="left:408px;top:342px;width:91px;height:16px;background:#e7e7e7;"><span class="t" style="top:2px;letter-spacing:-0.213px;left:0.6px;">16.04.19 11:33</span></div>
<div class="cell" style="left:500px;top:342px;width:76px;height:16px;background:#e7e7e7;"><span class="t" style="top:2px;letter-spacing:-0.431px;right:0.50px;margin-right:0.03px;">59.000</span></div>
<div class="cell" style="left:577px;top:342px;width:63px;height:16px;background:#e7e7e7;"><svg class="ar" style="left:2.5px;top:2.2px" width="12" height="10" viewBox="0 0 12 10"><path d="M0.7 2.5H5.6V0.9L10.4 4.6L5.6 8.3V6.7H0.7Z" fill="url(#ag)" stroke="#d9c23c" stroke-width="0.8" stroke-linejoin="round"/></svg><span class="t" style="top:2px;letter-spacing:-0.562px;left:18.8px;">3</span></div>
<div class="cell" style="left:641px;top:342px;width:107px;height:16px;background:#e7e7e7;"><span class="t" style="top:2px;letter-spacing:-0.326px;left:0.6px;">James Bonds</span></div>
<div class="cell" style="left:749px;top:342px;width:53px;height:16px;background:#e7e7e7;"><span class="t" style="top:2px;letter-spacing:-0.691px;left:0.6px;">James</span></div>
<div class="cell" style="left:803px;top:342px;width:58px;height:16px;background:#e7e7e7;"></div>
<div class="cell" style="left:862px;top:342px;width:17px;height:16px;background:#e7e7e7;"><span class="t" style="top:2px;letter-spacing:0.069px;left:0.6px;">Bon</span></div>
<div class="cell" style="left:7px;top:359px;width:21px;height:16px;background:linear-gradient(#e7e8ea,#dde0e4 25%,#d8dce1);border-bottom:1px solid #b7d0eb"><span class="t" style="top:3px;letter-spacing:-0.562px;left:2.1px;">14</span></div>
<div class="cell" style="left:29px;top:359px;width:17px;height:16px;background:#e7e7e7;"><svg class="ar" style="left:1.2px;top:0.5px" width="15" height="14" viewBox="0 0 15 14"><ellipse cx="7.5" cy="7" rx="6.55" ry="6.15" fill="#fff" stroke="#3d6f8e" stroke-width="1.05"/><ellipse cx="7.5" cy="7" rx="4.8" ry="4.5" fill="#cfe3ee" stroke="#5b8aa6" stroke-width="0.9"/><path d="M6.3 4.6L7.4 8.9L10.2 5.9L7.8 7.1Z" fill="#3d6f8e" stroke="#3d6f8e" stroke-width="0.5" stroke-linejoin="round"/></svg></div>
<div class="cell" style="left:47px;top:359px;width:78px;height:16px;background:#e7e7e7;"><span class="t" style="top:2px;letter-spacing:-0.133px;left:1.5px;">Rüstzeit Vorkalku</span></div>
<div class="cell" style="left:126px;top:359px;width:65px;height:16px;background:#e7e7e7;"><svg class="ar" style="left:2.5px;top:2.2px" width="12" height="10" viewBox="0 0 12 10"><path d="M0.7 2.5H5.6V0.9L10.4 4.6L5.6 8.3V6.7H0.7Z" fill="url(#ag)" stroke="#d9c23c" stroke-width="0.8" stroke-linejoin="round"/></svg><span class="t" style="top:2px;letter-spacing:-0.562px;right:0.50px;margin-right:0.16px;">1087</span></div>
<div class="cell" style="left:192px;top:359px;width:42px;height:16px;background:#e7e7e7;"><svg class="ar" style="left:2.5px;top:2.2px" width="12" height="10" viewBox="0 0 12 10"><path d="M0.7 2.5H5.6V0.9L10.4 4.6L5.6 8.3V6.7H0.7Z" fill="url(#ag)" stroke="#d9c23c" stroke-width="0.8" stroke-linejoin="round"/></svg><span class="t" style="top:2px;letter-spacing:-0.562px;right:0.50px;margin-right:0.16px;">260</span></div>
<div class="cell" style="left:235px;top:359px;width:45px;height:16px;background:#e7e7e7;"><svg class="ar" style="left:2.5px;top:2.2px" width="12" height="10" viewBox="0 0 12 10"><path d="M0.7 2.5H5.6V0.9L10.4 4.6L5.6 8.3V6.7H0.7Z" fill="url(#ag)" stroke="#d9c23c" stroke-width="0.8" stroke-linejoin="round"/></svg><span class="t" style="top:2px;letter-spacing:-0.562px;right:0.50px;margin-right:0.16px;">20</span></div>
<div class="cell" style="left:281px;top:359px;width:37px;height:16px;background:#e7e7e7;"><svg class="ar" style="left:2.5px;top:2.2px" width="12" height="10" viewBox="0 0 12 10"><path d="M0.7 2.5H5.6V0.9L10.4 4.6L5.6 8.3V6.7H0.7Z" fill="url(#ag)" stroke="#d9c23c" stroke-width="0.8" stroke-linejoin="round"/></svg><span class="t" style="top:2px;letter-spacing:-0.562px;right:0.50px;margin-right:0.16px;">20</span></div>
<div class="cell" style="left:319px;top:359px;width:88px;height:16px;background:#e7e7e7;"><span class="t" style="top:2px;letter-spacing:-0.266px;left:0.6px;">15.04.19 09:59</span></div>
<div class="cell" style="left:408px;top:359px;width:91px;height:16px;background:#e7e7e7;"><span class="t" style="top:2px;letter-spacing:-0.266px;left:0.6px;">10.12.19 12:50</span></div>
<div class="cell" style="left:500px;top:359px;width:76px;height:16px;background:#e7e7e7;"><span class="t" style="top:2px;letter-spacing:-0.405px;right:0.50px;margin-right:0.00px;">2.000</span></div>
<div class="cell" style="left:577px;top:359px;width:63px;height:16px;background:#e7e7e7;"><svg class="ar" style="left:2.5px;top:2.2px" width="12" height="10" viewBox="0 0 12 10"><path d="M0.7 2.5H5.6V0.9L10.4 4.6L5.6 8.3V6.7H0.7Z" fill="url(#ag)" stroke="#d9c23c" stroke-width="0.8" stroke-linejoin="round"/></svg><span class="t" style="top:2px;letter-spacing:-0.562px;left:18.8px;">3</span></div>
<div class="cell" style="left:641px;top:359px;width:107px;height:16px;background:#e7e7e7;"><span class="t" style="top:2px;letter-spacing:-0.326px;left:0.6px;">James Bonds</span></div>
<div class="cell" style="left:749px;top:359px;width:53px;height:16px;background:#e7e7e7;"><span class="t" style="top:2px;letter-spacing:-0.691px;left:0.6px;">James</span></div>
<div class="cell" style="left:803px;top:359px;width:58px;height:16px;background:#e7e7e7;"></div>
<div class="cell" style="left:862px;top:359px;width:17px;height:16px;background:#e7e7e7;"><span class="t" style="top:2px;letter-spacing:0.069px;left:0.6px;">Bon</span></div>
<div style="left:879px;top:117px;width:17px;height:259px;background:#f1f1f1"></div>
<div style="left:880px;top:134px;width:15px;height:17px;background:#c9c9c9"></div>
<svg style="left:883px;top:121.5px" width="10" height="9" viewBox="0 0 10 9"><path d="M1.5 7L4.6 3.2L7.7 7" fill="none" stroke="#555" stroke-width="2.1"/></svg>
<svg style="left:883px;top:363.3px" width="10" height="9" viewBox="0 0 10 9"><path d="M1.5 2L4.6 5.8L7.7 2" fill="none" stroke="#555" stroke-width="2.1"/></svg>
<div style="left:7px;top:376px;width:889px;height:17px;background:#f1f1f1"></div>
<div style="left:7px;top:376px;width:10px;height:17px;background:#666"></div>
<div style="left:34px;top:377px;width:255px;height:15px;background:#c9c9c9"></div>
<div style="left:879px;top:376px;width:17px;height:17px;background:#c8c8c8"></div>
<svg style="left:21px;top:380px" width="8" height="10" viewBox="0 0 8 10"><path d="M6.4 1.2L2.6 4.4L6.4 7.6" fill="none" stroke="#555" stroke-width="2.1"/></svg>
<svg style="left:867px;top:380px" width="8" height="10" viewBox="0 0 8 10"><path d="M1.8 1.2L5.6 4.4L1.8 7.6" fill="none" stroke="#555" stroke-width="2.1"/></svg>
<div style="left:12px;top:402px;width:80px;height:19px;border:1px solid #6b6b6b;background:linear-gradient(#fdefb8,#fbdf8a 50%,#f9d263)"></div>
<div style="left:13px;top:403px;width:10px;height:17px;background:linear-gradient(#f9cb52,#f6b02c 55%,#f29612)"></div>
<div style="left:99px;top:402px;width:75px;height:19px;border:1px solid #6b6b6b;background:linear-gradient(#fdefb8,#fbdf8a 50%,#f9d263)"></div>
<span class="t" style="top:406px;letter-spacing:0.259px;left:38.8px;">Open</span>
<span class="t" style="top:406px;letter-spacing:0.062px;left:121.0px;">Ca<u>n</u>cel</span>
<svg style="left:876px;top:407px" width="20" height="20" viewBox="0 0 20 20"><rect x="0" y="0" width="20" height="20" fill="#fafafa"/><path d="M3.1 9.3V3.1H9.7" fill="none" stroke="#444" stroke-width="2.2"/><path d="M11.5 1.8H15.5Q18 1.8 18 4.3V8.4H11.5Z" fill="#f47b20"/><rect x="2" y="12" width="6.4" height="6" fill="#444"/><path d="M16.9 10.2V16.9H10.2" fill="none" stroke="#444" stroke-width="2.2"/></svg>
</body></html>
